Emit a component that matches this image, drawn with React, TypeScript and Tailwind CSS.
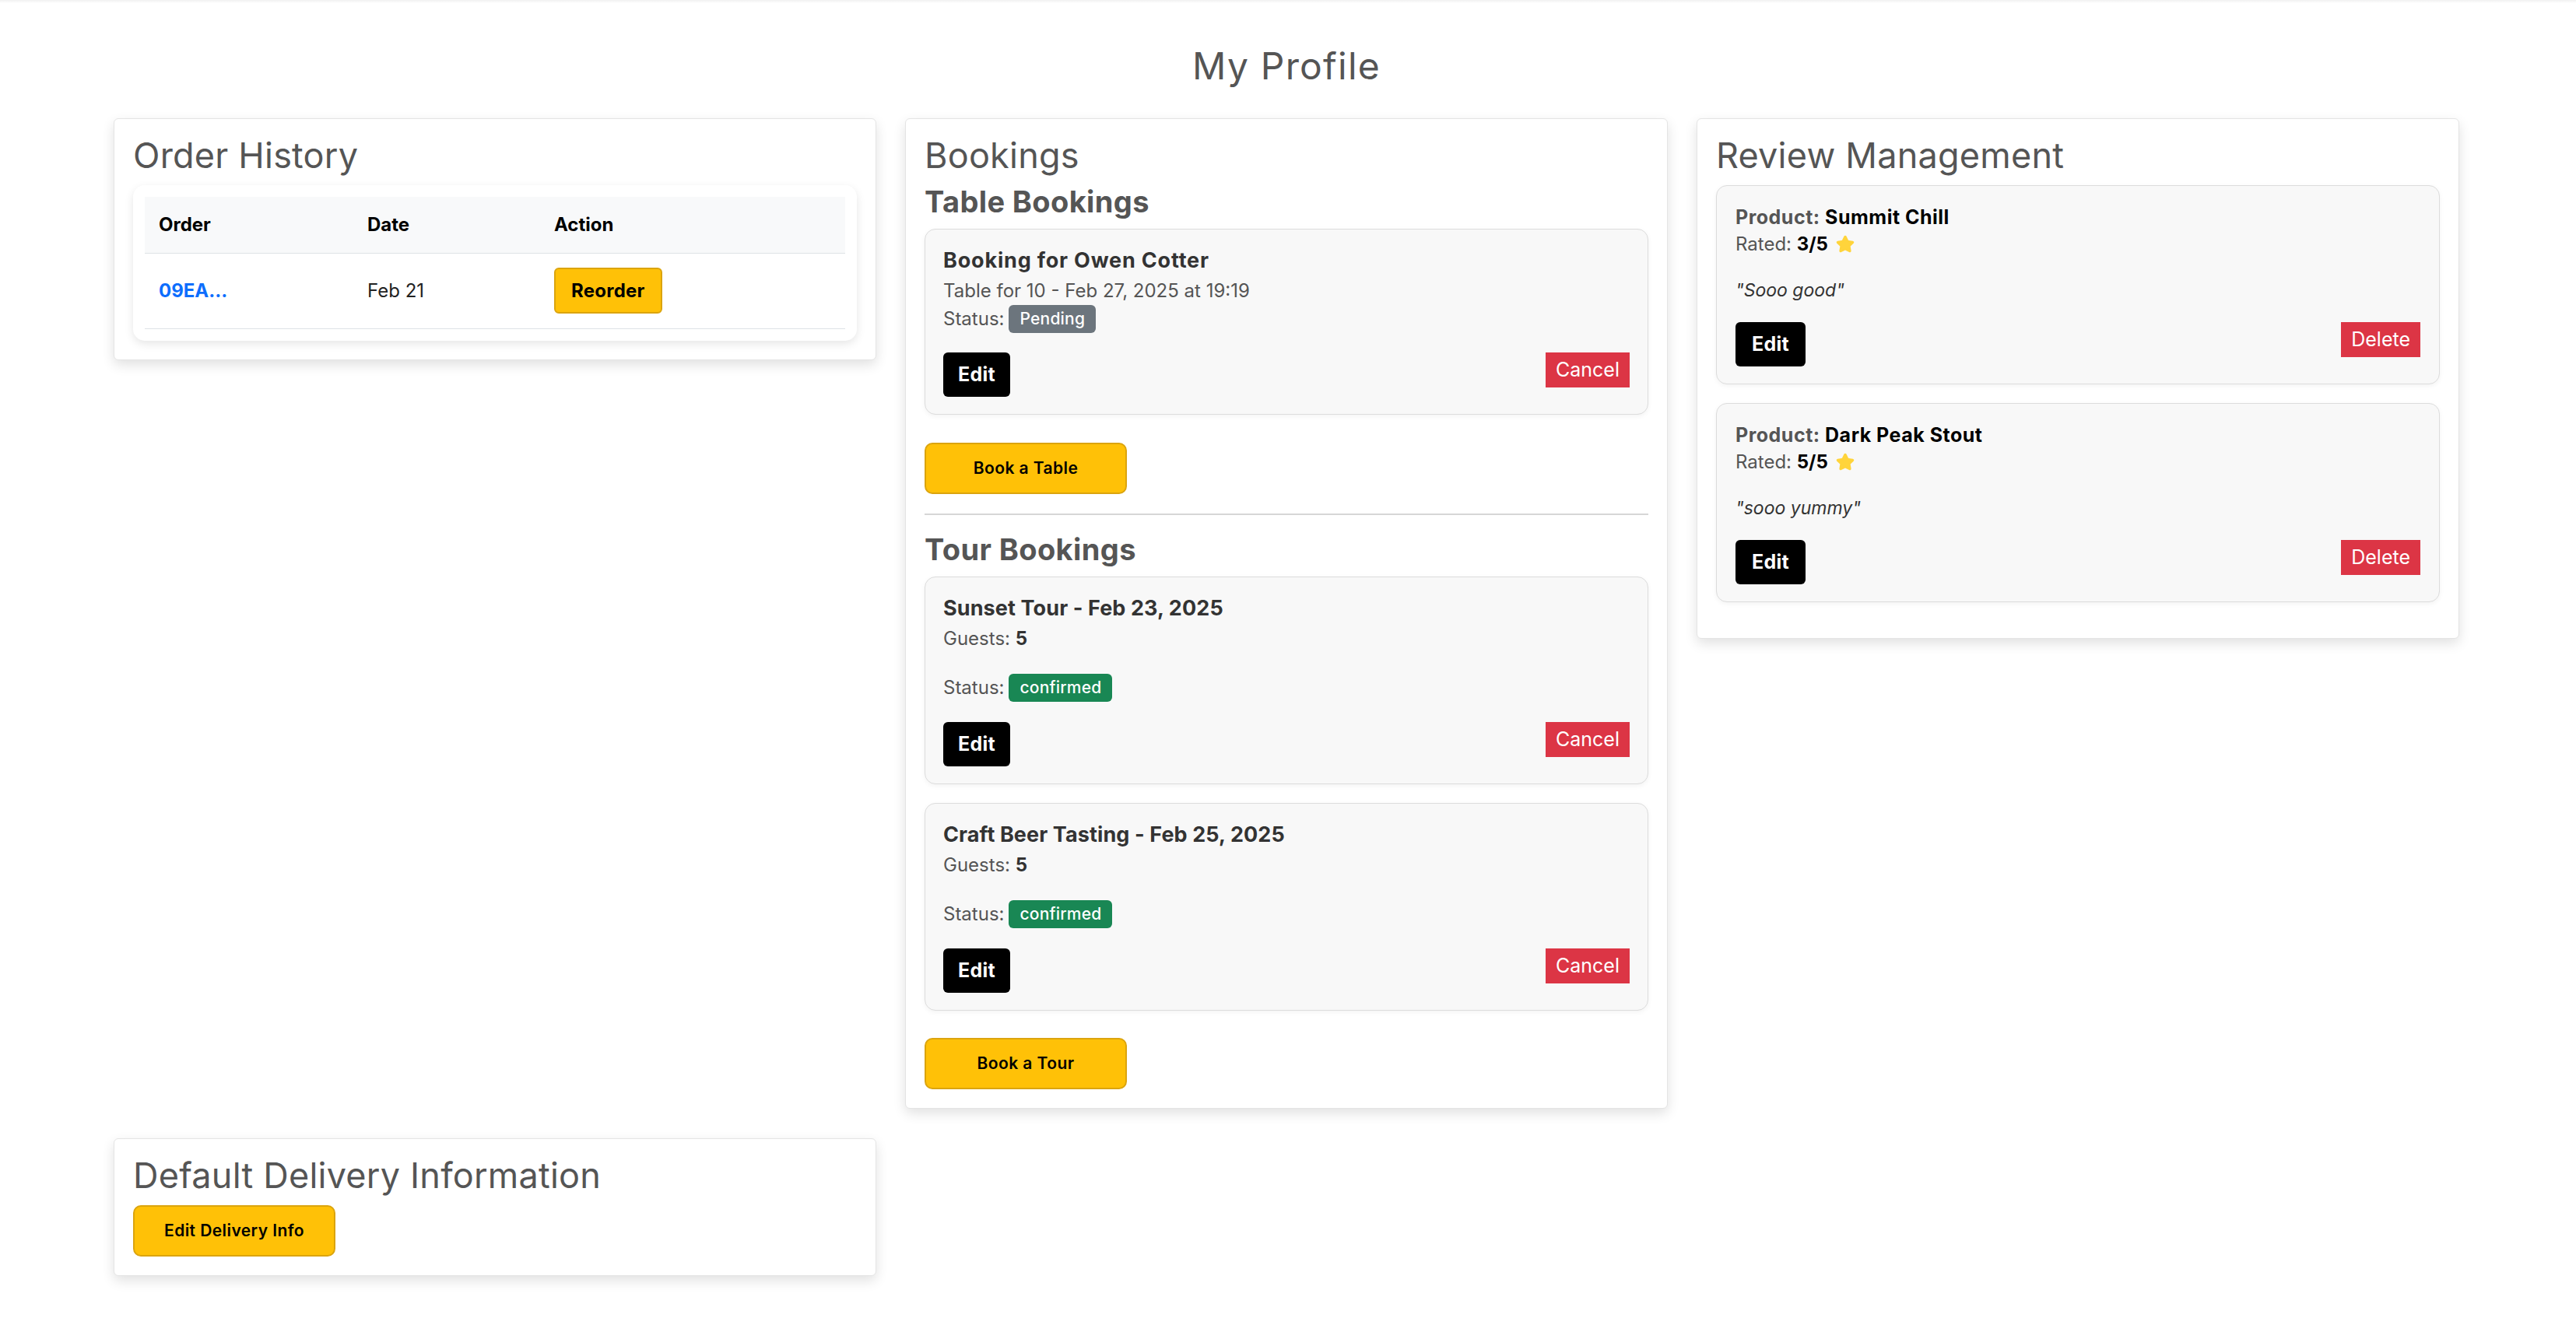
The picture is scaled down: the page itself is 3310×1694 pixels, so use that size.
import React from "react";
import { Star } from "lucide-react";

function Card({ children, className = "" }: { children: React.ReactNode; className?: string }) {
  return (
    <div
      className={`rounded-[6px] border border-[#e4e4e4] bg-white px-[24px] pt-[20px] shadow-[0_6px_16px_rgba(0,0,0,0.12)] ${className}`}
    >
      {children}
    </div>
  );
}

function CardTitle({ children, className = "mb-[11px]" }: { children: React.ReactNode; className?: string }) {
  return (
    <h3 className={`text-[45px] font-normal leading-[54px] tracking-[0.005em] text-[#555] ${className}`}>{children}</h3>
  );
}

function SubTitle({ children, className = "" }: { children: React.ReactNode; className?: string }) {
  return (
    <h4 className={`text-[38px] font-bold leading-[46px] tracking-[0.01em] text-[#555] ${className}`}>{children}</h4>
  );
}

function YellowButton({ children, className = "" }: { children: React.ReactNode; className?: string }) {
  return (
    <button
      className={`h-[66px] w-[260px] rounded-[10px] border-2 border-[#dba40e] bg-[#ffc107] text-[21px] font-semibold tracking-[0.02em] text-black ${className}`}
    >
      {children}
    </button>
  );
}

function EditButton({ px = "px-[19px]" }: { px?: string }) {
  return (
    <button className={`h-[57px] rounded-[6px] bg-black ${px} text-[25px] font-bold tracking-[0.01em] text-white`}>
      Edit
    </button>
  );
}

function RedButton({ label }: { label: string }) {
  return <button className="h-[45px] bg-[#dc3545] px-[13px] text-[25px] text-white">{label}</button>;
}

function Badge({ label, color }: { label: string; color: string }) {
  return (
    <span
      className={`ml-[6px] inline-flex h-[36px] items-center rounded-[6px] px-[14px] text-[21px] font-medium tracking-[0.01em] text-white ${color}`}
    >
      {label}
    </span>
  );
}

function SubCard({ children, className = "" }: { children: React.ReactNode; className?: string }) {
  return (
    <div
      className={`rounded-[14px] border border-[#dcdcdc] bg-[#f8f8f8] px-[23px] pb-[22px] pt-[24px] shadow-[0_2px_6px_rgba(0,0,0,0.05)] ${className}`}
    >
      {children}
    </div>
  );
}

function TourCard({ title }: { title: string }) {
  return (
    <SubCard>
      <div className="mb-[5px] text-[27px] font-bold leading-[32px] tracking-[0.004em] text-[#333]">{title}</div>
      <div className="mb-[27px] text-[24px] leading-[36px] text-[#555]">
        Guests: <span className="font-bold text-[#333]">5</span>
      </div>
      <div className="flex items-center text-[24px] leading-[36px] text-[#555]">
        Status:
        <Badge label="confirmed" color="bg-[#198754]" />
      </div>
      <div className="mt-[26px] flex items-start justify-between">
        <EditButton />
        <RedButton label="Cancel" />
      </div>
    </SubCard>
  );
}

function ReviewCard({ product, rating, text }: { product: string; rating: string; text: string }) {
  return (
    <div className="mb-[24px] rounded-[14px] border border-[#dcdcdc] bg-[#f8f8f8] px-[24px] pb-[22px] pt-[25px] shadow-[0_2px_6px_rgba(0,0,0,0.05)]">
      <div className="text-[25px] font-bold leading-[30px] tracking-[0.02em] text-[#555]">
        Product: <span className="text-black">{product}</span>
      </div>
      <div className="mt-[2px] flex items-center text-[24px] leading-[36px] text-[#555]">
        Rated:&nbsp;<span className="font-bold text-black">{rating}</span>
        <Star className="ml-[10px]" size={24} fill="#FFD43B" stroke="#FFD43B" strokeWidth={2.5} strokeLinejoin="round" />
      </div>
      <div className="mt-[24px] text-[23px] italic leading-[34px] text-[#333]">"{text}"</div>
      <div className="mt-[24px] flex items-start justify-between">
        <EditButton px="px-[21px]" />
        <RedButton label="Delete" />
      </div>
    </div>
  );
}

export default function App() {
  return (
    <div className="min-h-screen bg-white font-[Inter,'Noto_Sans',sans-serif]">
      <div className="h-[4px] bg-gradient-to-b from-[rgba(0,0,0,0.06)] to-transparent" />
      <div className="pl-[146px]">
        <div className="w-[3014px]">
          <h1 className="mb-[40px] mt-[53px] text-center text-[48px] font-normal leading-[55px] tracking-[0.025em] text-[#555]">
            My Profile
          </h1>

          <div className="grid grid-cols-3 items-start gap-x-[37px] gap-y-[38px]">
            {/* Order History */}
            <Card className="pb-[24px]">
              <CardTitle>Order History</CardTitle>
              <div className="rounded-[15px] bg-white p-[15px] shadow-[0_4px_12px_rgba(0,0,0,0.1)]">
                <table className="w-full border-collapse text-[24px]">
                  <thead>
                    <tr className="border-b border-[#dee2e6] bg-[#f8f9fa]">
                      <th className="h-[72px] w-[268px] pl-[18px] text-left font-bold text-black">Order</th>
                      <th className="h-[72px] w-[240px] pl-[18px] text-left font-bold text-black">Date</th>
                      <th className="h-[72px] pl-[18px] text-left font-bold text-black">Action</th>
                    </tr>
                  </thead>
                  <tbody>
                    <tr className="border-b border-[#dee2e6]">
                      <td className="h-[97px] pl-[18px] font-bold text-[#0d6efd]">09EA...</td>
                      <td className="h-[97px] pl-[18px] text-[#222]">Feb 21</td>
                      <td className="h-[97px] pl-[18px]">
                        <button className="h-[59px] rounded-[6px] border-2 border-[#dba40e] bg-[#ffc107] px-[20px] text-[24px] font-bold tracking-[0.01em] text-black">
                          Reorder
                        </button>
                      </td>
                    </tr>
                  </tbody>
                </table>
              </div>
            </Card>

            {/* Bookings */}
            <Card className="pb-[24px]">
              <CardTitle className="mb-[9px]">Bookings</CardTitle>
              <SubTitle className="mb-[12px]">Table Bookings</SubTitle>
              <SubCard>
                <div className="mb-[5px] text-[27px] font-bold leading-[32px] tracking-[0.03em] text-[#333]">
                  Booking for Owen Cotter
                </div>
                <div className="text-[24px] leading-[36px] text-[#555]">Table for 10 - Feb 27, 2025 at 19:19</div>
                <div className="flex items-center text-[24px] leading-[36px] text-[#555]">
                  Status:
                  <Badge label="Pending" color="bg-[#6c757d]" />
                </div>
                <div className="mt-[25px] flex items-start justify-between">
                  <EditButton />
                  <RedButton label="Cancel" />
                </div>
              </SubCard>
              <YellowButton className="mt-[36px]">Book a Table</YellowButton>
              <hr className="mt-[25px] border-0 border-t-2 border-[#d6d6d6]" />
              <SubTitle className="mb-[12px] mt-[21px]">Tour Bookings</SubTitle>
              <div className="flex flex-col gap-[24px]">
                <TourCard title="Sunset Tour - Feb 23, 2025" />
                <TourCard title="Craft Beer Tasting - Feb 25, 2025" />
              </div>
              <YellowButton className="mt-[35px]">Book a Tour</YellowButton>
            </Card>

            {/* Review Management */}
            <Card className="pb-[22px]">
              <CardTitle>Review Management</CardTitle>
              <ReviewCard product="Summit Chill" rating="3/5" text="Sooo good" />
              <ReviewCard product="Dark Peak Stout" rating="5/5" text="sooo yummy" />
            </Card>

            {/* Default Delivery Information */}
            <Card className="pb-[24px]">
              <CardTitle>Default Delivery Information</CardTitle>
              <YellowButton>Edit Delivery Info</YellowButton>
            </Card>
          </div>
        </div>
      </div>
    </div>
  );
}
